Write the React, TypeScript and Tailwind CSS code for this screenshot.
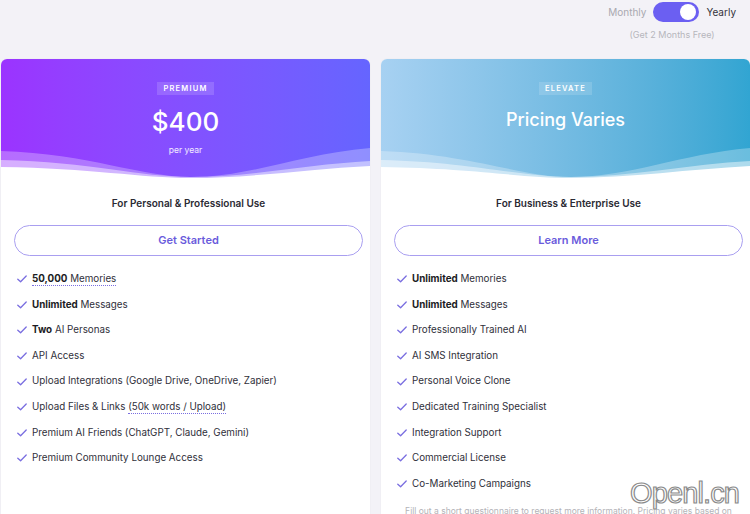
import React from "react";

type Feature = { bold?: string; text: string; dotted?: "bold" | "tail"; tail?: string };

const premiumFeatures: Feature[] = [
  { bold: "50,000", text: " Memories", dotted: "bold" },
  { bold: "Unlimited", text: " Messages" },
  { bold: "Two", text: " AI Personas" },
  { text: "API Access" },
  { text: "Upload Integrations (Google Drive, OneDrive, Zapier)" },
  { text: "Upload Files & Links ", tail: "(50k words / Upload)", dotted: "tail" },
  { text: "Premium AI Friends (ChatGPT, Claude, Gemini)" },
  { text: "Premium Community Lounge Access" },
];

const elevateFeatures: Feature[] = [
  { bold: "Unlimited", text: " Memories" },
  { bold: "Unlimited", text: " Messages" },
  { text: "Professionally Trained AI" },
  { text: "AI SMS Integration" },
  { text: "Personal Voice Clone" },
  { text: "Dedicated Training Specialist" },
  { text: "Integration Support" },
  { text: "Commercial License" },
  { text: "Co-Marketing Campaigns" },
];

function CheckIcon() {
  return (
    <svg width="10" height="8" viewBox="0 0 10 8" fill="none" className="shrink-0">
      <path d="M0.8 4.2 L3.6 6.8 L9.2 1" stroke="#7a6ee0" strokeWidth="1.3" strokeLinecap="round" strokeLinejoin="round" />
    </svg>
  );
}

function Wave() {
  return (
    <svg viewBox="0 0 370 30" preserveAspectRatio="none" className="absolute bottom-0 left-0 w-full h-[30px]">
      <path d="M0,3 C90,6 140,29 190,29 C250,29 300,6 370,0 L370,30 L0,30 Z" fill="#ffffff" fillOpacity="0.28" />
      <path d="M0,12 C90,14 140,29 190,29 C250,29 310,16 370,13 L370,30 L0,30 Z" fill="#ffffff" fillOpacity="0.45" />
      <path d="M0,19 C90,20 140,30 190,30 C250,30 310,21 370,18 L370,30 L0,30 Z" fill="#ffffff" />
    </svg>
  );
}

function FeatureRow({ f }: { f: Feature }) {
  return (
    <li className="flex items-center gap-[5px] h-[25.6px]">
      <CheckIcon />
      <span className="text-[9.8px] text-[#2f2f3a]">
        {f.bold && (
          <span
            className={
              "font-bold text-[#1c1c24] " +
              (f.dotted === "bold" ? "border-b border-dotted border-[#7a6ee0] pb-[1px]" : "")
            }
          >
            {f.bold}
            {f.dotted === "bold" ? <span className="font-normal text-[#2f2f3a]">{f.text}</span> : null}
          </span>
        )}
        {f.dotted !== "bold" && f.text}
        {f.tail && <span className="border-b border-dotted border-[#7a6ee0] pb-[1px]">{f.tail}</span>}
      </span>
    </li>
  );
}

function Card({
  gradient,
  badge,
  title,
  sub,
  heading,
  cta,
  features,
  note,
}: {
  gradient: string;
  badge: string;
  title: string;
  sub?: string;
  heading: string;
  cta: string;
  features: Feature[];
  note?: string;
}) {
  return (
    <div className="w-[369px] shrink-0 bg-white rounded-[6px] overflow-hidden shadow-[0_0_2px_rgba(0,0,0,0.06)]">
      <div className={"relative h-[119px] flex flex-col items-center text-white " + gradient}>
        <span className="mt-[23px] px-[6px] py-[3px] bg-white/15 text-[7.5px] font-semibold tracking-[0.16em] leading-none">
          {badge}
        </span>
        {sub ? (
          <>
            <span className="mt-[11px] text-[26px] font-medium leading-[32px]">{title}</span>
            <span className="mt-[8px] text-[8.5px] leading-none text-white/90">{sub}</span>
          </>
        ) : (
          <span className="mt-[13px] text-[18px] font-medium leading-[24px]">{title}</span>
        )}
        <Wave />
      </div>
      <div className="pl-[13px] pr-[7px] pt-[18px] pb-4">
        <div className="text-center text-[10px] font-semibold text-[#2a2a33] leading-[14px]">{heading}</div>
        <button className="mt-[15px] w-full h-[31px] rounded-full border border-[#a99ff0] text-[11px] font-semibold text-[#6a5bdc]">
          {cta}
        </button>
        <ul className="mt-[11px] pl-[3px]">
          {features.map((f, i) => (
            <FeatureRow key={i} f={f} />
          ))}
        </ul>
        {note && (
          <p className="mt-[8px] px-[7px] text-center text-[8.5px] leading-[12px] text-[#b3b3b8]">{note}</p>
        )}
      </div>
    </div>
  );
}

export default function App() {
  return (
    <div className="relative min-h-screen bg-[#f3f2f7] font-['Inter',sans-serif] overflow-hidden">
      <div className="flex justify-end pr-[14px] pt-[2px]">
        <div className="flex flex-col items-center">
          <div className="flex items-center gap-[7px]">
            <span className="text-[10px] text-[#a9a9b0]">Monthly</span>
            <div className="w-[46px] h-[20px] rounded-full bg-[#6b5ff2] flex items-center justify-end pr-[3px]">
              <div className="w-[16px] h-[16px] rounded-full bg-white" />
            </div>
            <span className="text-[10px] text-[#33333b]">Yearly</span>
          </div>
          <span className="mt-[6px] text-[9px] text-[#b6b6bc]">(Get 2 Months Free)</span>
        </div>
      </div>
      <div className="mt-[17px] pl-[1px] flex gap-[11px]">
        <Card
          gradient="bg-gradient-to-r from-[#9b33ff] to-[#6565ff]"
          badge="PREMIUM"
          title="$400"
          sub="per year"
          heading="For Personal & Professional Use"
          cta="Get Started"
          features={premiumFeatures}
        />
        <Card
          gradient="bg-gradient-to-r from-[#a7d1f2] to-[#31a5d2]"
          badge="ELEVATE"
          title="Pricing Varies"
          heading="For Business & Enterprise Use"
          cta="Learn More"
          features={elevateFeatures}
          note="Fill out a short questionnaire to request more information. Pricing varies based on your needs and the scope of the project."
        />
      </div>
      <span className="absolute left-[630px] top-[479px] text-[29px] leading-none font-['Liberation_Sans',sans-serif] text-white [-webkit-text-stroke:1.2px_#8a8a8a] tracking-[-0.03em]">
        Openl.cn
      </span>
    </div>
  );
}
